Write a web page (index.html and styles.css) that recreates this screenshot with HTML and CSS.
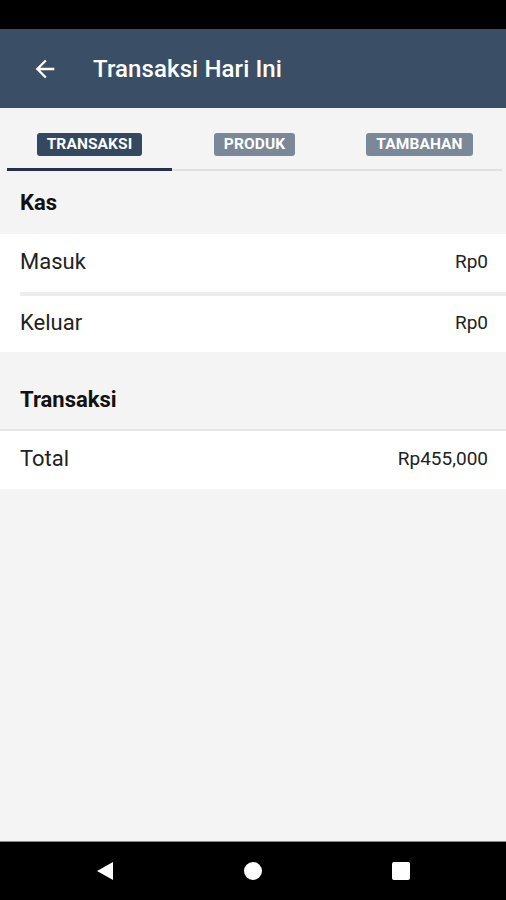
FILE: index.html
```html
<!DOCTYPE html>
<html>
<head>
<meta charset="utf-8">
<link rel="stylesheet" href="styles.css">
</head>
<body>
<div class="screen">
  <div class="statusbar"></div>
  <header class="appbar">
    <svg class="back" width="28" height="28" viewBox="0 0 24 24"><path d="M20 11H7.83l5.59-5.59L12 4l-8 8 8 8 1.41-1.41L7.83 13H20v-2z" fill="#fff"/></svg>
    <h1 class="title">Transaksi Hari Ini</h1>
  </header>
  <nav class="tabs">
    <div class="tab active"><span class="pill">TRANSAKSI</span></div>
    <div class="tab"><span class="pill">PRODUK</span></div>
    <div class="tab"><span class="pill">TAMBAHAN</span></div>
  </nav>
  <main class="content">
    <div class="section-head">Kas</div>
    <div class="group">
      <div class="row"><span class="label">Masuk</span><span class="value">Rp0</span></div>
      <div class="row"><span class="label">Keluar</span><span class="value">Rp0</span></div>
    </div>
    <div class="section-head spaced">Transaksi</div>
    <div class="group topline">
      <div class="row"><span class="label">Total</span><span class="value">Rp455,000</span></div>
    </div>
  </main>
  <footer class="navbar">
    <svg width="20" height="22" viewBox="0 0 20 22"><path d="M18 2 L2 11 L18 20 Z" fill="#fff"/></svg>
    <svg width="20" height="20" viewBox="0 0 20 20"><circle cx="10" cy="10" r="9" fill="#fff"/></svg>
    <svg width="20" height="20" viewBox="0 0 20 20"><rect x="1" y="1" width="18" height="18" rx="2" fill="#fff"/></svg>
  </footer>
</div>
</body>
</html>
```
FILE: styles.css
```css
* { box-sizing: border-box; margin: 0; padding: 0; }
html, body { width: 506px; height: 900px; overflow: hidden; }
body { font-family: Roboto, "Noto Sans", sans-serif; background: #f4f4f4; }
.screen { display: flex; flex-direction: column; height: 900px; }
.statusbar { height: 29px; background: #000; flex: none; }
.appbar {
  height: 79px; background: #3a4f66; flex: none;
  display: flex; align-items: center; padding-left: 31px; gap: 34px;
}
.back { flex: none; }
.title { color: #fff; font-size: 24px; font-weight: 500; letter-spacing: 0.1px; }
.tabs {
  height: 64px; flex: none; display: flex; padding: 0 4px 0 7px;
  background: #f4f4f4;
}
.tab {
  flex: 1; display: flex; justify-content: center; align-items: flex-start;
  padding-top: 25px; border-bottom: 2px solid #e0e0e0; height: 63px;
}
.tab.active { border-bottom: 3px solid #2b2d4f; }
.pill {
  background: #7b8898; color: #fff; font-size: 15.5px; font-weight: 700;
  padding: 3px 10px; border-radius: 3px; line-height: 17px; letter-spacing: 0.1px;
}
.tab.active .pill { background: #34485f; }
.content { flex: 1; background: #f4f4f4; padding-top: 3px; }
.section-head {
  height: 59px; display: flex; align-items: center; padding: 0 0 5px 20px;
  font-size: 22px; font-weight: 700; color: #111;
}
.section-head.spaced { margin-top: 19px; height: 58px; padding-bottom: 2px; }
.group { background: #fff; }
.group.topline { border-top: 2px solid #e6e6e6; }
.row {
  height: 58px; display: flex; justify-content: space-between; align-items: center;
  padding: 0 18px 4px 20px;
}
.row + .row { border-top: 4px solid #ececec; margin-left: 20px; padding-left: 0; height: 60px; }
.label { font-size: 22px; color: #222; }
.value { font-size: 19px; color: #222; }
.navbar {
  height: 59px; flex: none; background: #000; border-top: 1px solid #888;
  display: flex; justify-content: center; align-items: center; gap: 128px;
}
```
